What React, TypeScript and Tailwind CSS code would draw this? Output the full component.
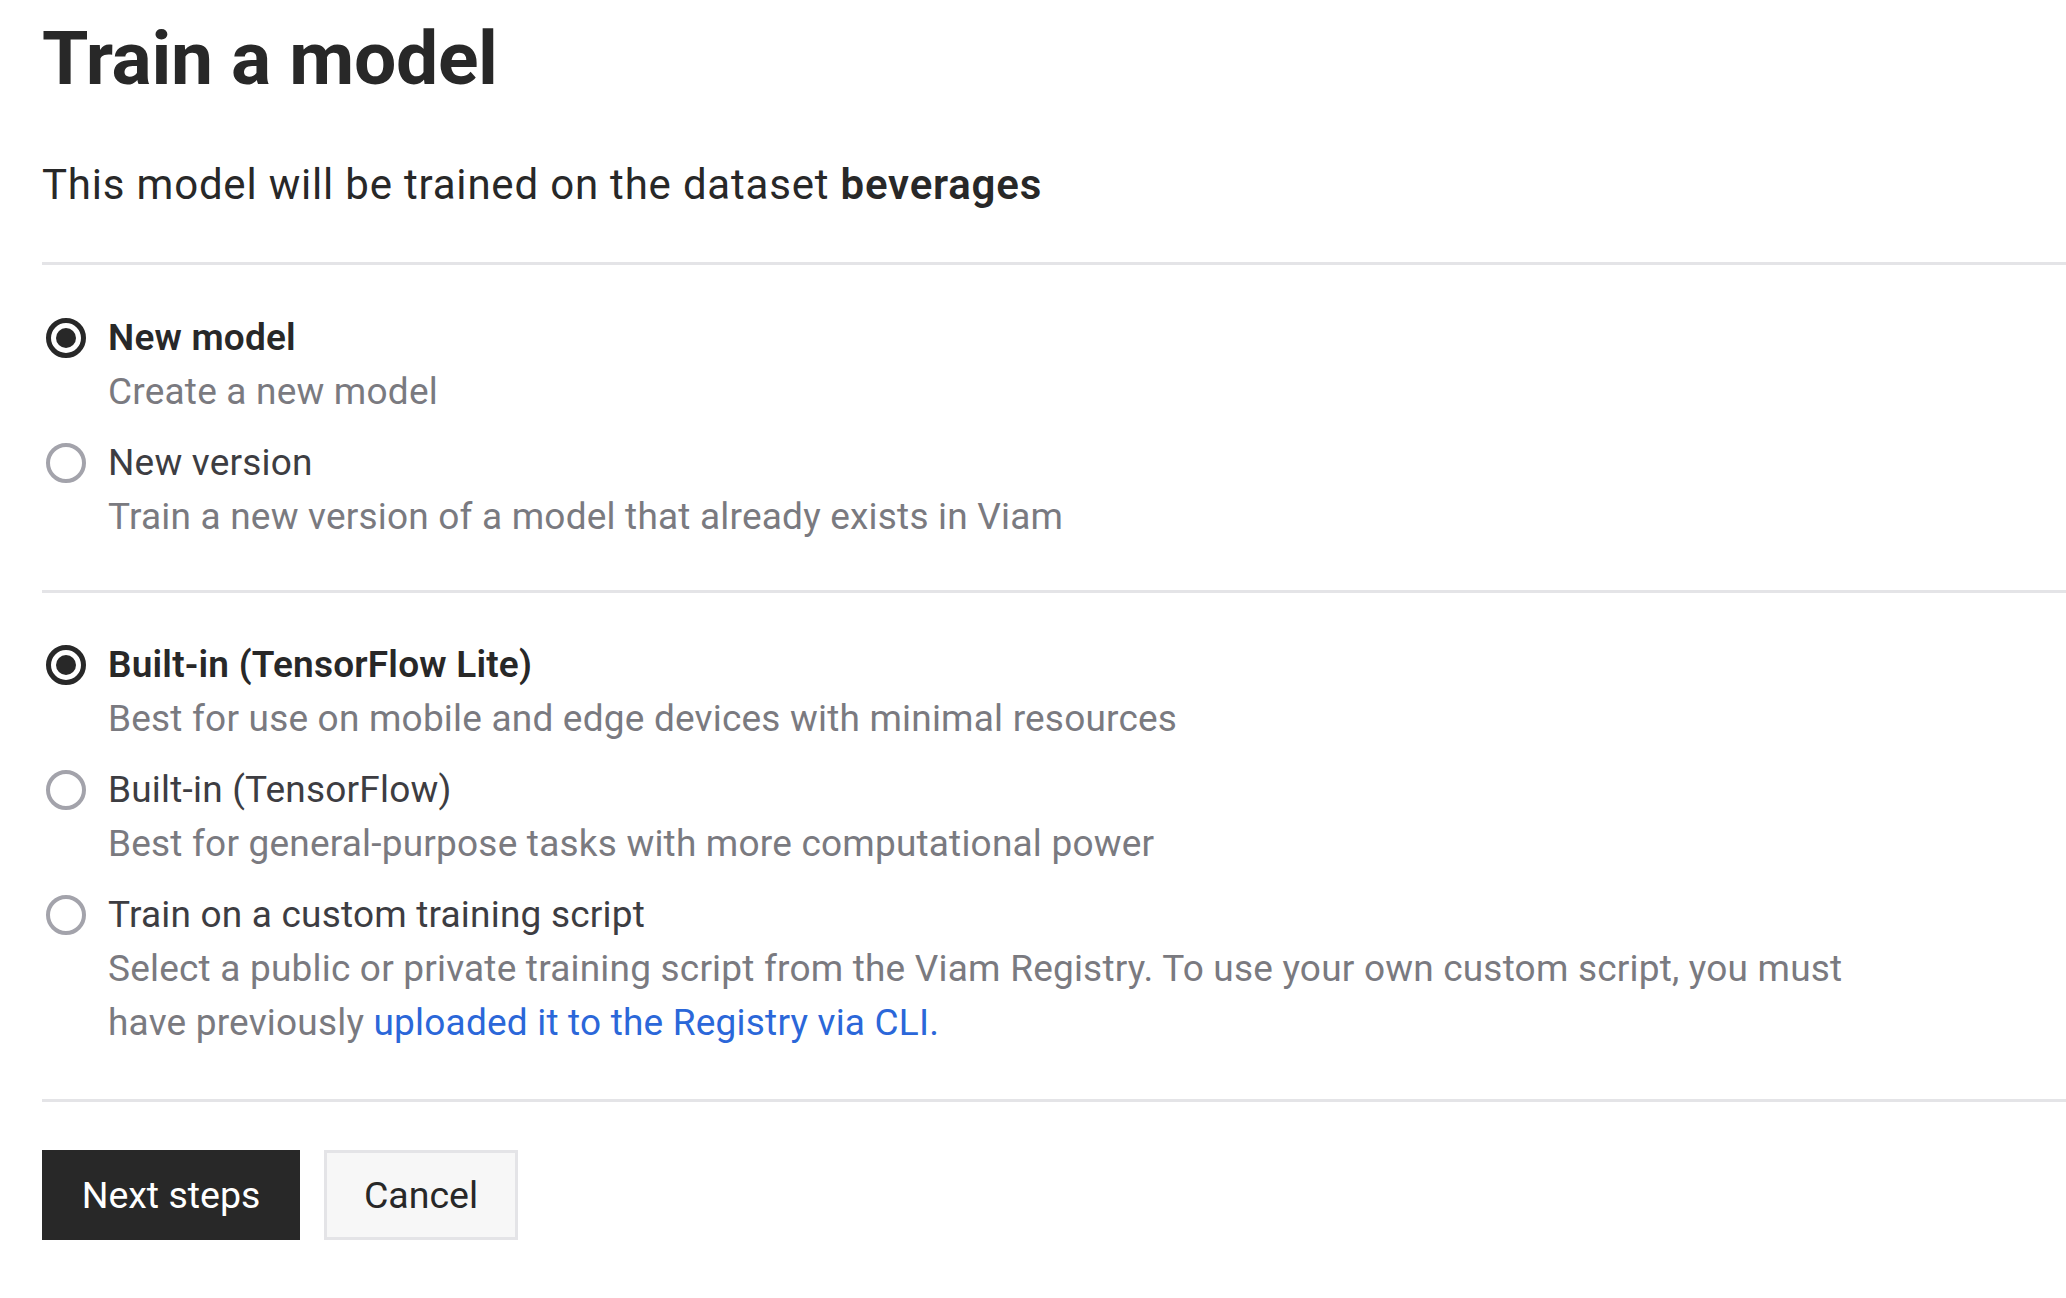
import { useState } from "react";

type Option = {
  id: string;
  label: string;
  description: React.ReactNode;
};

const MODEL_OPTIONS: Option[] = [
  { id: "new-model", label: "New model", description: "Create a new model" },
  {
    id: "new-version",
    label: "New version",
    description: "Train a new version of a model that already exists in Viam",
  },
];

const TRAINING_OPTIONS: Option[] = [
  {
    id: "tflite",
    label: "Built-in (TensorFlow Lite)",
    description: "Best for use on mobile and edge devices with minimal resources",
  },
  {
    id: "tf",
    label: "Built-in (TensorFlow)",
    description: "Best for general-purpose tasks with more computational power",
  },
  {
    id: "custom",
    label: "Train on a custom training script",
    description: (
      <>
        Select a public or private training script from the Viam Registry. To
        use your own custom script, you must
        <br />
        have previously{" "}
        <a href="#" className="text-[#2b67d9]">
          uploaded it to the Registry via CLI.
        </a>
      </>
    ),
  },
];

function Radio({ checked }: { checked: boolean }) {
  return (
    <span className="ml-[4px] flex h-[54px] w-[40px] shrink-0 items-center">
      {checked ? (
        <span className="flex h-[40px] w-[40px] items-center justify-center rounded-full border-[5px] border-[#282828]">
          <span className="h-[20px] w-[20px] rounded-full bg-[#282828]" />
        </span>
      ) : (
        <span className="h-[40px] w-[40px] rounded-full border-[4px] border-[#a3a3ab]" />
      )}
    </span>
  );
}

function RadioGroup({
  options,
  value,
  onChange,
}: {
  options: Option[];
  value: string;
  onChange: (id: string) => void;
}) {
  return (
    <div className="flex flex-col gap-[17px]">
      {options.map((opt) => {
        const checked = opt.id === value;
        return (
          <label
            key={opt.id}
            className="flex cursor-pointer gap-[22px]"
            onClick={() => onChange(opt.id)}
          >
            <Radio checked={checked} />
            <div className="flex flex-col tracking-[0.2px]">
              <span
                className={`text-[37px] leading-[54px] ${
                  checked
                    ? "font-semibold text-[#282828]"
                    : "font-normal text-[#3d3d42]"
                }`}
              >
                {opt.label}
              </span>
              <span className="text-[37px] leading-[54px] text-[#7a7a80]">
                {opt.description}
              </span>
            </div>
          </label>
        );
      })}
    </div>
  );
}

export default function App() {
  const [model, setModel] = useState("new-model");
  const [training, setTraining] = useState("tflite");

  return (
    <div
      className="min-h-screen bg-white pl-[42px] pt-[21px] text-[#282828]"
      style={{ fontFamily: "Roboto, 'Noto Sans', sans-serif" }}
    >
      <h1 className="text-[75px] font-bold leading-[74px] tracking-[-0.3px]">
        Train a model
      </h1>
      <p className="mt-[60px] text-[42px] leading-[60px] tracking-[0.8px]">
        This model will be trained on the dataset{" "}
        <span className="font-semibold">beverages</span>
      </p>

      <div className="mt-[47px] border-t-[3px] border-[#e4e4e7] pb-[46px] pt-[46px]">
        <RadioGroup options={MODEL_OPTIONS} value={model} onChange={setModel} />
      </div>

      <div className="border-t-[3px] border-[#e4e4e7] pb-[49px] pt-[45px]">
        <RadioGroup
          options={TRAINING_OPTIONS}
          value={training}
          onChange={setTraining}
        />
      </div>

      <div className="flex gap-[24px] border-t-[3px] border-[#e4e4e7] pt-[48px]">
        <button className="h-[90px] w-[258px] bg-[#282828] text-[37.5px] text-white">
          Next steps
        </button>
        <button className="h-[90px] w-[194px] border-[3px] border-[#e4e4e7] bg-[#f7f7f7] text-[37.5px] text-[#282828]">
          Cancel
        </button>
      </div>
    </div>
  );
}
